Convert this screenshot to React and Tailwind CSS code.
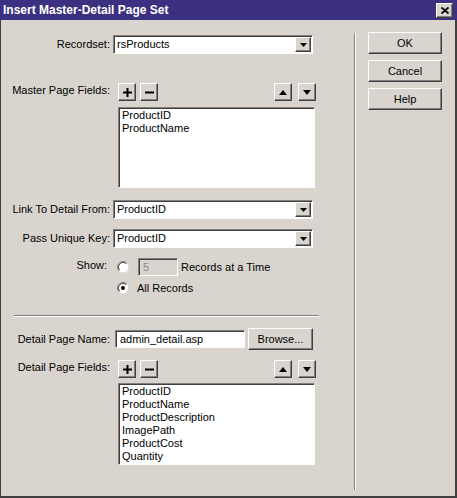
import React from 'react'

const raised = 'bg-[#d9d5ce] border border-t-white border-l-white border-r-[#404040] border-b-[#404040] shadow-[inset_-1px_-1px_0_#808080]'
const sunken = 'border border-t-[#808080] border-l-[#808080] border-r-white border-b-white shadow-[inset_1px_1px_0_#404040]'

const DownTri = () => (
    <svg width="8" height="5" viewBox="0 0 8 5"><path d="M0 0h8L4 5z" fill="#000" /></svg>
)
const UpTri = () => (
    <svg width="8" height="5" viewBox="0 0 8 5"><path d="M0 5h8L4 0z" fill="#000" /></svg>
)

const Select = ({ value }) => (
    <div className={`flex h-[19px] w-[200px] items-stretch bg-white p-[1px] ${sunken}`}>
        <span className="flex flex-1 items-center pl-[2px] leading-none">{value}</span>
        <div className={`flex w-[16px] items-center justify-center ${raised}`}>
            <svg width="7" height="4" viewBox="0 0 7 4"><path d="M0 0h7L3.5 4z" fill="#000" /></svg>
        </div>
    </div>
)

const ToolButton = ({ children }) => (
    <div className={`flex h-[18px] w-[18px] items-center justify-center ${raised}`}>{children}</div>
)

const Plus = () => (
    <svg width="9" height="9" viewBox="0 0 9 9">
        <path d="M0 4.5h9M4.5 0v9" stroke="#000" strokeWidth="2" />
    </svg>
)
const Minus = () => (
    <svg width="9" height="9" viewBox="0 0 9 9">
        <path d="M0 4.5h9" stroke="#000" strokeWidth="2" />
    </svg>
)

const Radio = ({ checked }) => (
    <svg width="12" height="12" viewBox="0 0 12 12">
        <circle cx="6" cy="6" r="5.5" fill="#fff" />
        <path d="M2.1 9.9A5.5 5.5 0 0 1 9.9 2.1" stroke="#808080" fill="none" />
        <path d="M2.8 9.2A4.5 4.5 0 0 1 9.2 2.8" stroke="#404040" fill="none" />
        {checked && <circle cx="6" cy="6" r="2" fill="#000" />}
    </svg>
)

const FieldTools = () => (
    <div className="ml-[8px] flex w-[198px] items-center justify-between">
        <div className="flex gap-[4px]">
            <ToolButton><Plus /></ToolButton>
            <ToolButton><Minus /></ToolButton>
        </div>
        <div className="flex gap-[6px]">
            <ToolButton><UpTri /></ToolButton>
            <ToolButton><DownTri /></ToolButton>
        </div>
    </div>
)

const ListBox = ({ items, height }) => (
    <div className={`ml-[117px] w-[197px] bg-white pl-[3px] pt-[1px] ${sunken} ${height}`}>
        {items.map(item => (
            <div key={item} className="h-[13px] leading-[13px]">{item}</div>
        ))}
    </div>
)

const DialogButton = ({ label }) => (
    <div className={`flex h-[22px] w-[74px] items-center justify-center ${raised}`}>{label}</div>
)

export default function App() {
    return (
        <div className="flex h-[498px] w-[457px] flex-col overflow-hidden bg-[#d9d5ce] font-['Liberation_Sans',Arial,sans-serif] text-[11px] leading-[13px] text-black">
            {/* title bar */}
            <div className="flex h-[20px] shrink-0 items-center justify-between bg-[#3c3080] pl-[3px] pr-[4px]">
                <span className="text-[12px] font-bold text-white">Insert Master-Detail Page Set</span>
                <div className={`flex h-[15px] w-[17px] items-center justify-center ${raised}`}>
                    <svg width="8" height="7" viewBox="0 0 8 7">
                        <path d="M0.5 0.5l7 6M7.5 0.5l-7 6" stroke="#000" strokeWidth="1.8" />
                    </svg>
                </div>
            </div>

            <div className="flex flex-1 border-b-2 border-l border-r-2 border-b-[#404040] border-l-[#404040] border-r-[#404040]">
                {/* form */}
                <div className="flex w-[353px] shrink-0 flex-col">
                    <div className="mt-[15px] flex items-center">
                        <span className="w-[109px] text-right">Recordset:</span>
                        <div className="ml-[3px]"><Select value="rsProducts" /></div>
                    </div>

                    <div className="mt-[29px] flex h-[18px] items-center">
                        <span className="w-[109px] pb-[4px] text-right">Master Page Fields:</span>
                        <FieldTools />
                    </div>
                    <div className="mt-[6px]">
                        <ListBox items={['ProductID', 'ProductName']} height="h-[81px]" />
                    </div>

                    <div className="mt-[12px] flex items-center">
                        <span className="w-[109px] text-right">Link To Detail From:</span>
                        <div className="ml-[3px]"><Select value="ProductID" /></div>
                    </div>
                    <div className="mt-[10px] flex items-center">
                        <span className="w-[109px] text-right">Pass Unique Key:</span>
                        <div className="ml-[3px]"><Select value="ProductID" /></div>
                    </div>

                    <div className="mt-[10px] flex h-[18px] items-center">
                        <span className="w-[106px] pb-[3px] text-right">Show:</span>
                        <div className="ml-[10px] flex items-center">
                            <Radio />
                            <div className={`ml-[9px] flex h-[18px] w-[40px] items-center pl-[4px] text-[#8a8a8a] ${sunken}`}>5</div>
                            <span className="ml-[3px]">Records at a Time</span>
                        </div>
                    </div>
                    <div className="mt-[5px] flex h-[14px] items-center">
                        <div className="ml-[116px] flex items-center">
                            <Radio checked />
                            <span className="ml-[8px]">All Records</span>
                        </div>
                    </div>

                    <div className="ml-[13px] mt-[20px] h-[2px] w-[305px] border-b border-t border-b-white border-t-[#808080]" />

                    <div className="mt-[11px] flex h-[22px] items-center">
                        <span className="w-[109px] text-right">Detail Page Name:</span>
                        <div className={`ml-[5px] flex h-[18px] w-[130px] items-center bg-white pl-[4px] ${sunken}`}>admin_detail.asp</div>
                        <div className={`ml-[3px] flex h-[22px] w-[65px] items-center justify-center ${raised}`}>Browse...</div>
                    </div>

                    <div className="mt-[10px] flex h-[18px] items-center">
                        <span className="w-[109px] pb-[4px] text-right">Detail Page Fields:</span>
                        <FieldTools />
                    </div>
                    <div className="mt-[5px]">
                        <ListBox
                            items={['ProductID', 'ProductName', 'ProductDescription', 'ImagePath', 'ProductCost', 'Quantity']}
                            height="h-[82px]"
                        />
                    </div>
                </div>

                {/* divider */}
                <div className="mb-[6px] mt-[13px] w-[2px] border-l border-r border-l-[#808080] border-r-white" />

                {/* buttons */}
                <div className="ml-[12px] mt-[12px] flex flex-col gap-[6px]">
                    <DialogButton label="OK" />
                    <DialogButton label="Cancel" />
                    <DialogButton label="Help" />
                </div>
            </div>
        </div>
    )
}
